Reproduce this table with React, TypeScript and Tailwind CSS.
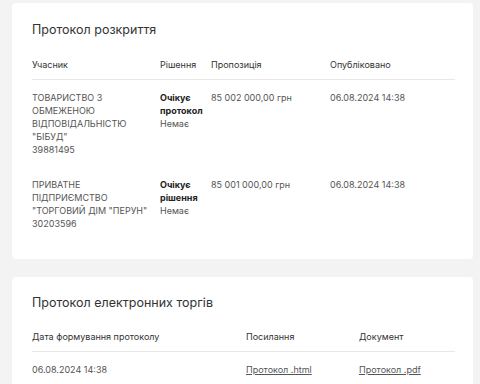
import React from "react";

const font = { fontFamily: "Inter, 'Noto Sans', sans-serif" };

export default function App() {
  return (
    <div className="min-h-screen bg-[#f3f3f3] pt-[3px] pb-6" style={font}>
      <div className="ml-[12px] w-[461px] bg-white rounded-[4px] pt-[19px] pl-[20px] pr-[18px] pb-[18px]">
        <h2 className="text-[12.5px] leading-[16px] text-[#333333] font-normal">Протокол розкриття</h2>
        <div className="mt-[11px] grid grid-cols-[128px_51px_119px_1fr] border-b border-[#e8e8e8] pt-[9px] pb-[8px] text-[9px] leading-[13px] text-[#333333]">
          <div>Учасник</div>
          <div>Рішення</div>
          <div>Пропозиція</div>
          <div>Опубліковано</div>
        </div>
        <div className="grid grid-cols-[128px_51px_119px_1fr] py-[11px] text-[9px] leading-[13px] text-[#555555]">
          <div>
            ТОВАРИСТВО З<br />ОБМЕЖЕНОЮ<br />ВІДПОВІДАЛЬНІСТЮ<br />"БІБУД"<br />39881495
          </div>
          <div>
            <div className="font-bold text-[#222222]">Очікує протокол</div>
            <div>Немає</div>
          </div>
          <div>85 002 000,00 грн</div>
          <div>06.08.2024 14:38</div>
        </div>
        <div className="grid grid-cols-[128px_51px_119px_1fr] py-[11px] text-[9px] leading-[13px] text-[#555555]">
          <div>
            ПРИВАТНЕ<br />ПІДПРИЄМСТВО<br />"ТОРГОВИЙ ДІМ "ПЕРУН"<br />30203596
          </div>
          <div>
            <div className="font-bold text-[#222222]">Очікує рішення</div>
            <div>Немає</div>
          </div>
          <div>85 001 000,00 грн</div>
          <div>06.08.2024 14:38</div>
        </div>
      </div>

      <div className="mt-[18px] ml-[12px] w-[461px] bg-white rounded-[4px] pt-[18px] pl-[20px] pr-[18px] pb-[18px]">
        <h2 className="text-[12.5px] leading-[16px] text-[#333333] font-normal">Протокол електронних торгів</h2>
        <div className="mt-[10px] grid grid-cols-[214px_113px_1fr] border-b border-[#e8e8e8] pt-[9px] pb-[8px] text-[9px] leading-[13px] text-[#333333]">
          <div>Дата формування протоколу</div>
          <div>Посилання</div>
          <div>Документ</div>
        </div>
        <div className="grid grid-cols-[214px_113px_1fr] py-[11px] text-[9px] leading-[13px] text-[#555555]">
          <div>06.08.2024 14:38</div>
          <div><a className="underline">Протокол .html</a></div>
          <div><a className="underline">Протокол .pdf</a></div>
        </div>
      </div>
    </div>
  );
}
